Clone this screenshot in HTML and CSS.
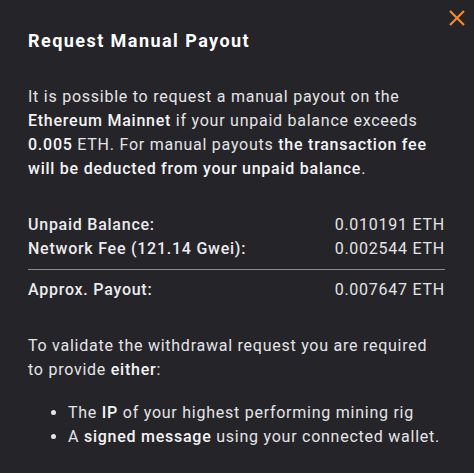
FILE: index.html
```html
<!DOCTYPE html>
<html lang="en">
<head>
    <meta charset="UTF-8">
    <meta name="viewport" content="width=device-width, initial-scale=1.0">
    <title>Request Manual Payout</title>
    <link rel="stylesheet" href="styles.css">
</head>
<body>
    <div class="modal">
        <button class="close-btn" aria-label="Close">
            <svg width="16" height="16" viewBox="0 0 16 16">
                <path d="M1 1L15 15M15 1L1 15" stroke="#f7892b" stroke-width="2.2" fill="none"/>
            </svg>
        </button>
        <h2>Request Manual Payout</h2>
        <p class="intro">
            It is possible to request a manual payout on the
            <strong>Ethereum Mainnet</strong> if your unpaid balance exceeds
            <strong>0.005</strong> ETH. For manual payouts <strong>the transaction fee
            will be deducted from your unpaid balance</strong>.
        </p>
        <div class="summary">
            <div class="row">
                <span class="label">Unpaid Balance:</span>
                <span class="value">0.010191 ETH</span>
            </div>
            <div class="row">
                <span class="label">Network Fee (121.14 Gwei):</span>
                <span class="value">0.002544 ETH</span>
            </div>
            <div class="row total">
                <span class="label">Approx. Payout:</span>
                <span class="value">0.007647 ETH</span>
            </div>
        </div>
        <p class="validate">
            To validate the withdrawal request you are required
            to provide <strong>either</strong>:
        </p>
        <ul class="options">
            <li>The <strong>IP</strong> of your highest performing mining rig</li>
            <li>A <strong>signed message</strong> using your connected wallet.</li>
        </ul>
    </div>
</body>
</html>
```

FILE: styles.css
```css
* {
    box-sizing: border-box;
    margin: 0;
    padding: 0;
}
html, body {
    background: #252428;
    height: 100%;
}
body {
    font-family: Roboto, "Liberation Sans", sans-serif;
    color: #e4e4e6;
    font-size: 16px;
    line-height: 24px;
    letter-spacing: 0.75px;
    overflow: hidden;
}
.modal {
    position: relative;
    padding: 30px 29px 0 28px;
}
.close-btn {
    position: absolute;
    top: 9px;
    right: 8px;
    background: none;
    border: none;
    cursor: pointer;
    width: 18px;
    height: 18px;
    display: flex;
    align-items: center;
    justify-content: center;
}
h2 {
    font-size: 18px;
    line-height: 22px;
    font-weight: 700;
    letter-spacing: 1.45px;
    color: #ffffff;
}
strong {
    font-weight: 500;
    color: #f4f4f6;
}
.intro {
    margin-top: 33px;
}
.summary {
    margin-top: 32px;
}
.row {
    display: flex;
    justify-content: space-between;
}
.label {
    font-weight: 500;
    color: #ececee;
}
.total {
    border-top: 1px solid #8c8b8f;
    margin-top: 8px;
    padding-top: 8px;
}
.validate {
    margin-top: 32px;
}
.options {
    margin-top: 19px;
    padding-left: 40px;
}
```
